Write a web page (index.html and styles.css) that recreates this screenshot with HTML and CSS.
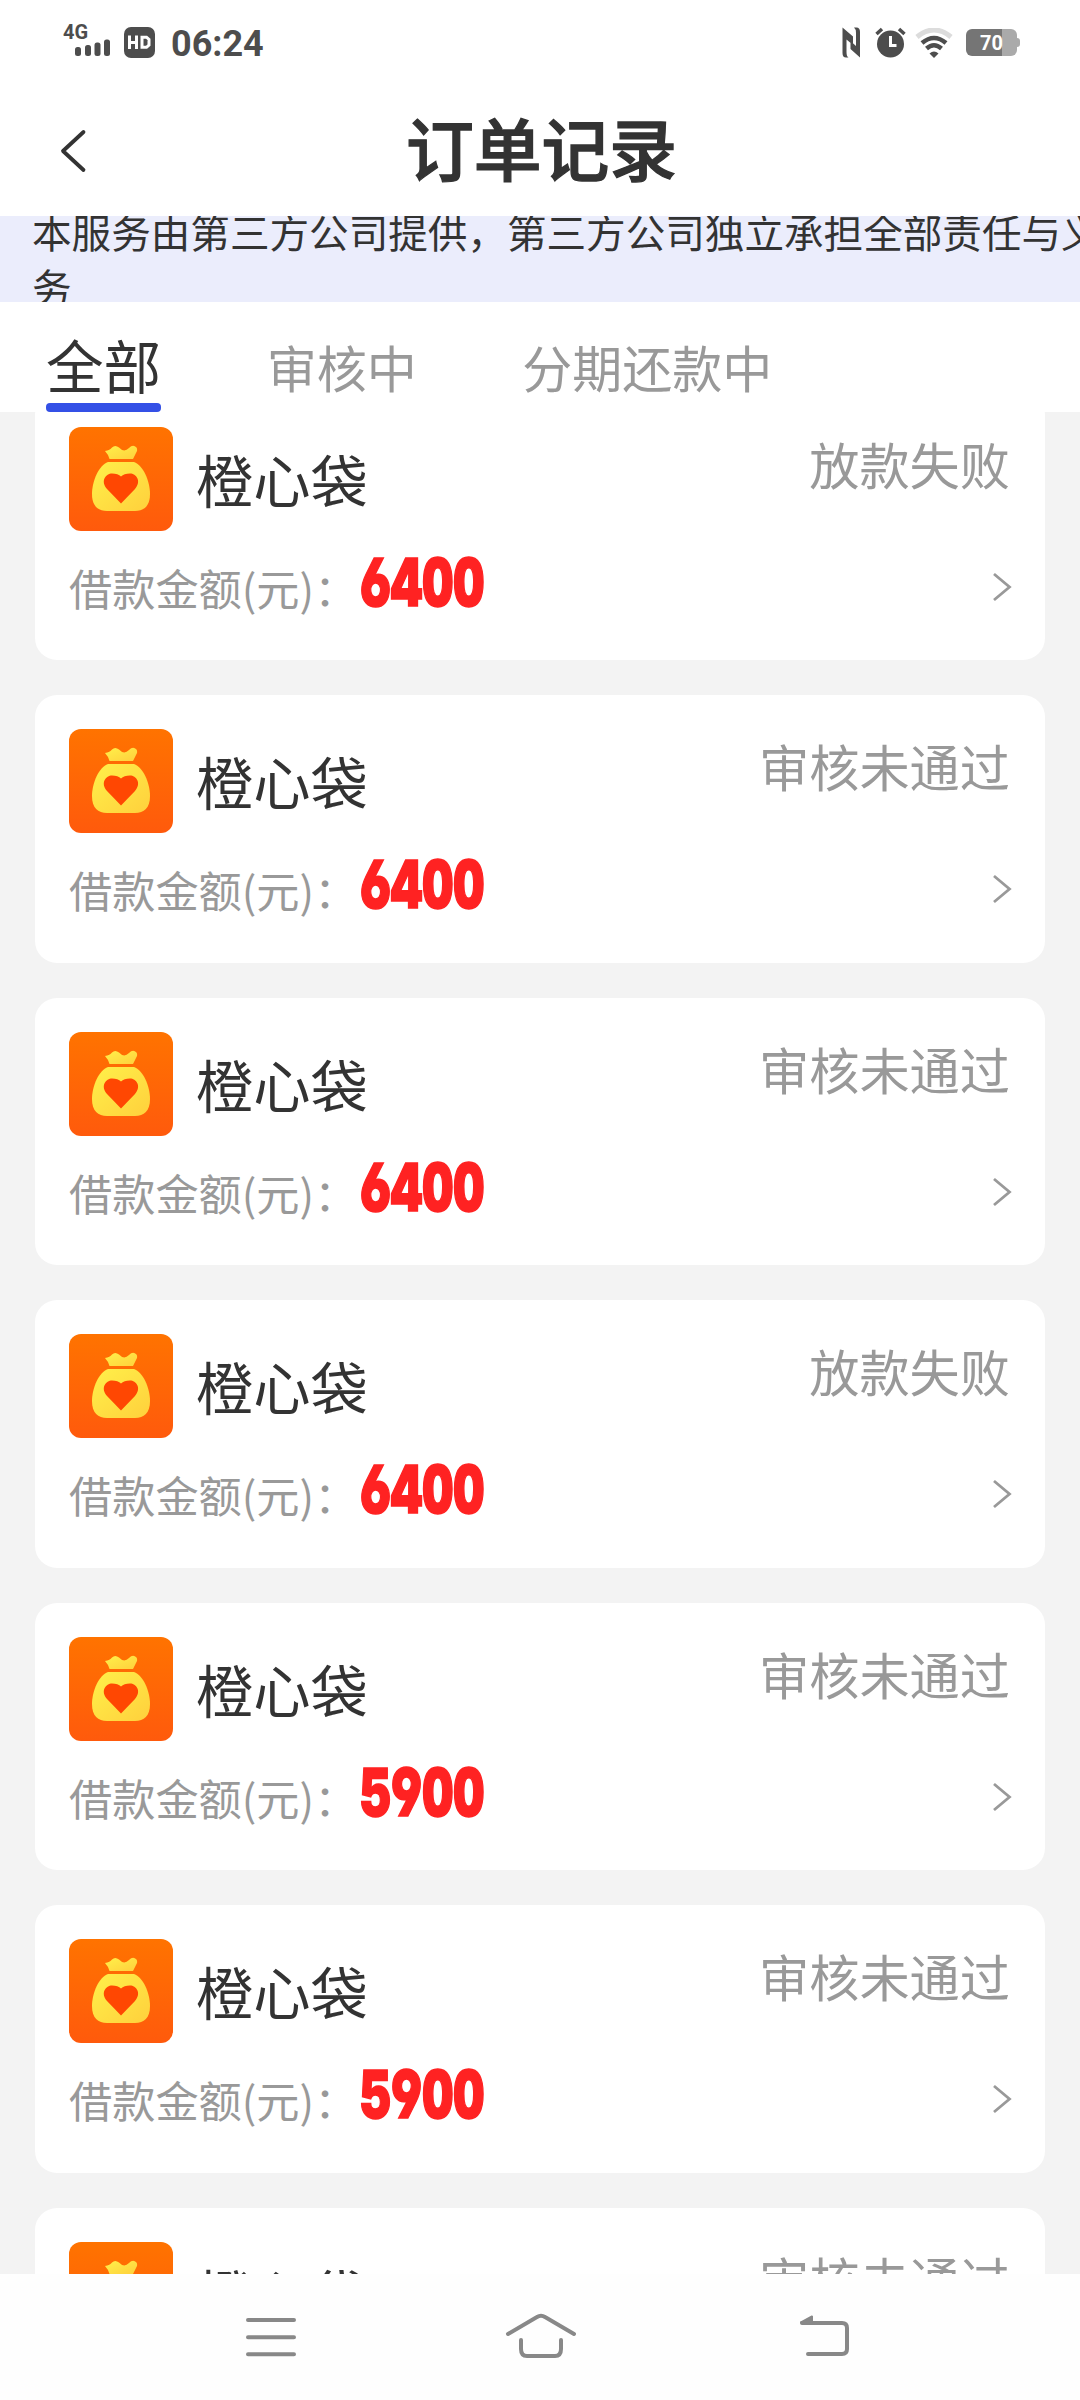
FILE: index.html
```html
<!DOCTYPE html>
<html lang="zh-CN">
<head>
<meta charset="utf-8">
<title>订单记录</title>
<link rel="stylesheet" href="styles.css">
</head>
<body>
<svg class="defs" aria-hidden="true">
  <defs>
    <linearGradient id="logo-bg" x1="0" y1="0" x2="0" y2="1"><stop offset="0" stop-color="#ff7300"/><stop offset="1" stop-color="#ff5a0c"/></linearGradient>
    <linearGradient id="bag-fill" x1="0" y1="0" x2="1" y2="1"><stop offset="0" stop-color="#fff04a"/><stop offset="1" stop-color="#ffd03c"/></linearGradient>
  </defs>
  <symbol id="logo" viewBox="0 0 104 104">
    <rect width="104" height="104" rx="12" fill="url(#logo-bg)"/>
    <path d="M36 24 Q41 23 43 20.500 Q46 17.500 50 20.500 Q55 26 60 21 Q64 17 67.500 20.500 Q69 23 67 26 L64 32 H40.500 Q39 27 36 24Z" fill="url(#bag-fill)"/>
    <path d="M39 35 H65 C74 38 81 54 81 67 C81 79 75 84 66 84 H38 C29 84 23 79 23 67 C23 54 30 38 39 35Z" fill="url(#bag-fill)"/>
    <path d="M52 76.500 L38 62 C31 54 37 46.500 43 46.500 Q49 46.500 52 49.500 Q55 46.500 61 46.500 C67 46.500 73 54 66 62Z" fill="#ff4702"/>
  </symbol>
  <symbol id="arrow" viewBox="0 0 20 30">
    <path d="M2 2 L17.500 15 L2 28" fill="none" stroke="#999" stroke-width="2.800"/>
  </symbol>
</svg>

<div class="screen">
  <div class="status-bar">
    <div class="signal">
      <span class="network">4G</span>
      <svg class="bars" width="36" height="17" viewBox="0 0 36 17" fill="#4d4d4d"><rect x="0" y="8" width="6" height="9" rx="2.500"/><rect x="10" y="6" width="6" height="11" rx="2.500"/><rect x="19.500" y="3.500" width="6" height="13.500" rx="2.500"/><rect x="29" y="0.500" width="6" height="16.500" rx="2.500"/></svg>
    </div>
    <svg class="hd" width="31" height="31" viewBox="0 0 31 31"><rect width="31" height="31" rx="7" fill="#4d4d4d"/><path d="M5.500 8.500V22M12.500 8.500V22M5.500 15.500H12.500M18 10.200H22.500L25 12.500V18L22.500 20.300H18Z" fill="none" stroke="#fff" stroke-width="3"/></svg>
    <span class="clock">06:24</span>
    <svg class="nfc" width="19" height="31" viewBox="0 0 19 31"><path d="M0.500 0.500L11 9.500V18L4.500 12.500V25Q4.500 29.500 6.500 30.500H4Q0.500 30.500 0.500 26ZM18 30.500L8.500 22V14L14 19V6Q14 2 12 0.500H14.500Q18 0.500 18 5Z" fill="#4d4d4d"/></svg>
    <svg class="alarm" width="31" height="31" viewBox="0 0 31 31"><circle cx="15.500" cy="17" r="13.500" fill="#4d4d4d"/><path d="M1.500 7L7 2M24 2L29.500 7" stroke="#4d4d4d" stroke-width="3.500"/><path d="M15.500 9V18.500H21.500" fill="none" stroke="#fff" stroke-width="3"/></svg>
    <svg class="wifi" width="38" height="30" viewBox="0 0 38 30" fill="none"><path d="M2 9Q19 -5 36 9" stroke="#dcdcdc" stroke-width="5"/><path d="M7 15Q19 5 31 15M11.500 20.500Q19 14 26.500 20.500" stroke="#4d4d4d" stroke-width="4.500"/><path d="M14.500 25.500Q19 21.500 23.500 25.500L19 30Z" fill="#4d4d4d"/></svg>
    <div class="battery"><span class="battery-level">70</span></div>
  </div>

  <div class="nav-header">
    <svg class="back" width="28" height="46" viewBox="0 0 28 46"><path d="M24.500 4L4 23L24.500 42" fill="none" stroke="#333" stroke-width="3.800" stroke-linecap="round" stroke-linejoin="round"/></svg>
    <h1 class="title">订单记录</h1>
  </div>

  <div class="notice"><p class="notice-text">本服务由第三方公司提供，第三方公司独立承担全部责任与义务</p></div>

  <div class="tabs">
    <span class="tab active">全部</span>
    <span class="tab">审核中</span>
    <span class="tab">分期还款中</span>
  </div>

  <div class="orders">
    <div class="card">
      <div class="card-top"><svg class="logo"><use href="#logo"/></svg><span class="name">橙心袋</span><span class="state">放款失败</span></div>
      <div class="card-bottom"><span class="label">借款金额(元)：</span><span class="amount">6400</span><svg class="arrow"><use href="#arrow"/></svg></div>
    </div>
    <div class="card">
      <div class="card-top"><svg class="logo"><use href="#logo"/></svg><span class="name">橙心袋</span><span class="state">审核未通过</span></div>
      <div class="card-bottom"><span class="label">借款金额(元)：</span><span class="amount">6400</span><svg class="arrow"><use href="#arrow"/></svg></div>
    </div>
    <div class="card">
      <div class="card-top"><svg class="logo"><use href="#logo"/></svg><span class="name">橙心袋</span><span class="state">审核未通过</span></div>
      <div class="card-bottom"><span class="label">借款金额(元)：</span><span class="amount">6400</span><svg class="arrow"><use href="#arrow"/></svg></div>
    </div>
    <div class="card">
      <div class="card-top"><svg class="logo"><use href="#logo"/></svg><span class="name">橙心袋</span><span class="state">放款失败</span></div>
      <div class="card-bottom"><span class="label">借款金额(元)：</span><span class="amount">6400</span><svg class="arrow"><use href="#arrow"/></svg></div>
    </div>
    <div class="card">
      <div class="card-top"><svg class="logo"><use href="#logo"/></svg><span class="name">橙心袋</span><span class="state">审核未通过</span></div>
      <div class="card-bottom"><span class="label">借款金额(元)：</span><span class="amount">5900</span><svg class="arrow"><use href="#arrow"/></svg></div>
    </div>
    <div class="card">
      <div class="card-top"><svg class="logo"><use href="#logo"/></svg><span class="name">橙心袋</span><span class="state">审核未通过</span></div>
      <div class="card-bottom"><span class="label">借款金额(元)：</span><span class="amount">5900</span><svg class="arrow"><use href="#arrow"/></svg></div>
    </div>
    <div class="card">
      <div class="card-top"><svg class="logo"><use href="#logo"/></svg><span class="name">橙心袋</span><span class="state">审核未通过</span></div>
    </div>
  </div>

  <div class="system-nav">
    <svg width="54" height="44" viewBox="0 0 54 44"><path d="M4 5H50M4 22.300H50M4 39.300H50"/></svg>
    <svg width="74" height="50" viewBox="0 0 74 50"><path d="M4 22L33 5Q37 2.500 41 5L70 22M17 28V37Q17 44 23 44H51Q57 44 57 37V28"/></svg>
    <svg width="56" height="46" viewBox="0 0 56 46"><path d="M6 9H46Q51 9 51 14V35Q51 40 46 40H12"/><path class="solid" d="M5 8.500L16 2.500V8.500Z"/></svg>
  </div>
</div>
</body>
</html>
```
FILE: styles.css
```css
* { box-sizing: border-box; }
body {
  margin: 0;
  font-family: "Noto Sans CJK SC", sans-serif;
  color: #333;
  background: #fff;
}
.defs { position: absolute; width: 0; height: 0; }
.screen {
  width: 1080px;
  height: 2400px;
  display: flex;
  flex-direction: column;
  overflow: hidden;
}

/* Status bar */
.status-bar {
  height: 86px;
  flex: none;
  display: flex;
  align-items: flex-start;
  padding: 0 60px 0 63px;
  color: #4d4d4d;
}
.signal { width: 48px; padding-top: 24px; }
.network { display: block; height: 15px; font: 700 20px/17px Roboto, sans-serif; }
.bars { display: block; margin-left: 12px; }
.hd { margin: 27px 0 0 13px; }
.clock { margin: 21px 0 0 16px; font: 700 36px/46px Roboto, sans-serif; }
.nfc { margin: 27px 0 0 auto; }
.alarm { margin: 27px 0 0 14px; }
.wifi { margin: 28px 0 0 9px; }
.battery {
  position: relative;
  width: 51px;
  height: 27px;
  margin: 29px 3px 0 13px;
  border-radius: 6px;
  background: linear-gradient(90deg, #757575 70%, #aaa 70%);
}
.battery::after {
  content: "";
  position: absolute;
  left: 51px;
  top: 9px;
  width: 3px;
  height: 9px;
  border-radius: 0 3px 3px 0;
  background: #aaa;
}
.battery-level {
  display: block;
  text-align: center;
  font: 700 20px/28px Roboto, sans-serif;
  color: #fff;
}

/* Page header */
.nav-header {
  height: 130px;
  flex: none;
  display: flex;
  align-items: center;
  padding: 0 58px 0 59px;
}
.title {
  flex: 1;
  margin: -8px 26px 0 0;
  text-align: center;
  font-size: 67.8px;
  line-height: 100px;
  font-weight: 500;
  -webkit-text-stroke: 1.3px #333;
}

.notice {
  height: 86px;
  flex: none;
  overflow: hidden;
  background: #ebedfc;
}
.notice-text {
  width: 1080px;
  margin: -13px 0 0 32px;
  font-size: 39.6px;
  line-height: 55px;
}

/* Tabs */
.tabs {
  height: 110px;
  flex: none;
  display: flex;
  align-items: stretch;
  gap: 105.5px;
  padding-left: 46px;
}
.tab {
  padding-top: 28px;
  font-size: 50px;
  line-height: 72px;
  color: #999;
}
.tab.active {
  display: flex;
  flex-direction: column;
  justify-content: space-between;
  padding-top: 26px;
  font-size: 57.6px;
  color: #333;
}
.tab.active::after {
  content: "";
  height: 9px;
  border-radius: 4px;
  background: #3450e6;
}

/* Order list */
.orders {
  flex: 1;
  min-height: 0;
  overflow: hidden;
  display: flex;
  flex-direction: column;
  gap: 35px;
  padding: 0 35px;
  background: #f3f3f3;
}
.card {
  flex: none;
  height: 267.5px;
  padding: 34px 35px 0 34px;
  border-radius: 22px;
  background: #fff;
}
.card:first-child { margin-top: -19.5px; }
.card-top { display: flex; align-items: flex-start; height: 104px; }
.logo { width: 104px; height: 104px; }
.name { margin-left: 23px; font-size: 57.3px; line-height: 104px; }
.state { margin: -1px 0 0 auto; font-size: 50.2px; line-height: 74px; color: #999; }
.card-bottom { display: flex; align-items: baseline; padding-top: 13px; }
.label { font-size: 43.2px; line-height: 76px; color: #999; }
.amount {
  width: 140px;
  margin-left: 3px;
  font: 900 66.5px/76px Inter, sans-serif;
  font-feature-settings: "cv03", "cv04", "tnum";
  color: #ff2222;
  -webkit-text-stroke: 1.6px #ff2222;
  transform: scaleX(.725);
  transform-origin: 0 50%;
}
.arrow { width: 20px; height: 30px; margin: 28px -2px 0 auto; align-self: flex-start; }

/* System navigation */
.system-nav {
  height: 126px;
  flex: none;
  display: grid;
  grid-template-columns: 270px 270px 296px;
  align-items: center;
  justify-items: center;
  padding-left: 136px;
  background: #fefefe;
}
.system-nav path {
  fill: none;
  stroke: #888;
  stroke-width: 4;
  stroke-linecap: round;
  stroke-linejoin: round;
}
.system-nav .solid { fill: #888; stroke-width: 2; }
```
